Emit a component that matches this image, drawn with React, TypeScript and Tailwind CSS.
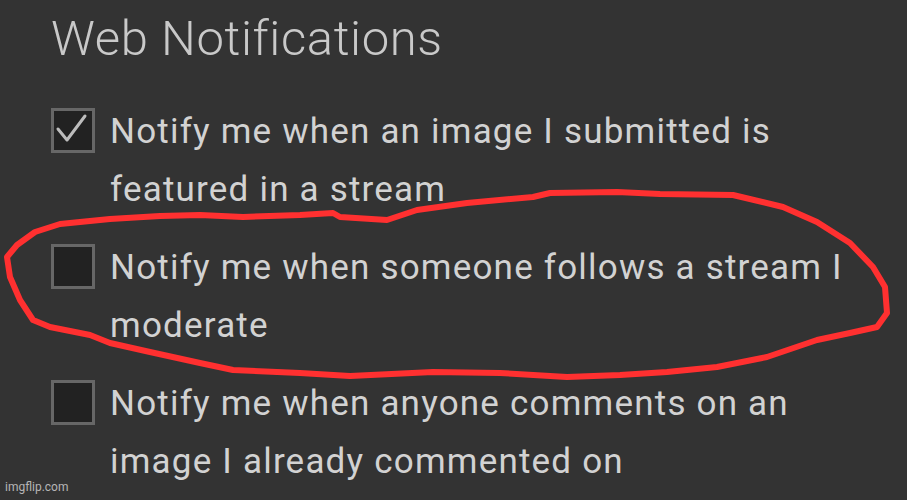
import type { ReactNode } from 'react';

type Option = {
  id: string;
  label: string;
  checked: boolean;
};

const options: Option[] = [
  { id: 'featured', label: 'Notify me when an image I submitted is featured in a stream', checked: true },
  { id: 'follows', label: 'Notify me when someone follows a stream I moderate', checked: false },
  { id: 'comments', label: 'Notify me when anyone comments on an image I already commented on', checked: false },
];

function Checkbox({ checked }: { checked: boolean }) {
  return (
    <span className="mt-[5px] flex h-[45px] w-[44px] shrink-0 items-center justify-center border-[3px] border-[#676767] bg-[#222222]">
      {checked ? (
        <svg width="38" height="38" viewBox="0 0 38 38" fill="none">
          <path d="M4 17 L13 28 L31 4" stroke="#bdbdbd" strokeWidth="3" strokeLinecap="round" strokeLinejoin="round" />
        </svg>
      ) : null}
    </span>
  );
}

function Row({ option }: { option: Option }): ReactNode {
  return (
    <label className="flex items-start gap-[15px]">
      <Checkbox checked={option.checked} />
      <span className="w-[760px] text-[35px] leading-[58px] tracking-[1.2px] text-[#d2d2d2]">{option.label}</span>
    </label>
  );
}

export default function App() {
  return (
    <div
      className="relative h-[500px] w-[907px] overflow-hidden bg-[#333333]"
      style={{ fontFamily: 'Roboto, "Liberation Sans", sans-serif' }}
    >
      <div className="pl-[51px] pt-[14px]">
        <h1 className="text-[49px] font-light leading-[49px] tracking-[0.6px] text-[#c9c9c9]">Web Notifications</h1>

        <div className="mt-[40px] flex flex-col gap-[20px]">
          {options.map((option) => (
            <Row key={option.id} option={option} />
          ))}
        </div>
      </div>

      {/* hand drawn circle */}
      <svg className="pointer-events-none absolute left-0 top-0" width="907" height="500" viewBox="0 0 907 500" fill="none">
        <path
          d="M200 215 L243 217 L300 215 L333 213 L340 217 L387 220 L417 210 L467 203 L533 197 L550 193 L617 192 L660 194 L733 195 L783 207 L817 222 L850 243 L873 267 L885 287 L887 313 L877 327 L850 333 L817 340 L767 357 L717 367 L667 372 L620 375 L567 377 L500 373 L433 372 L350 376 L300 373 L233 370 L200 363 L150 352 L110 343 L90 335 L50 327 L33 320 L20 300 L10 277 L7 257 L17 245 L35 232 L60 224 L110 219 L160 216 Z"
          stroke="#ff3030"
          strokeWidth="6"
          strokeLinejoin="round"
          strokeLinecap="round"
        />
      </svg>

      <span className="absolute bottom-[4px] left-[5px] text-[12px] text-[#b5b5b5]">imgflip.com</span>
    </div>
  );
}
